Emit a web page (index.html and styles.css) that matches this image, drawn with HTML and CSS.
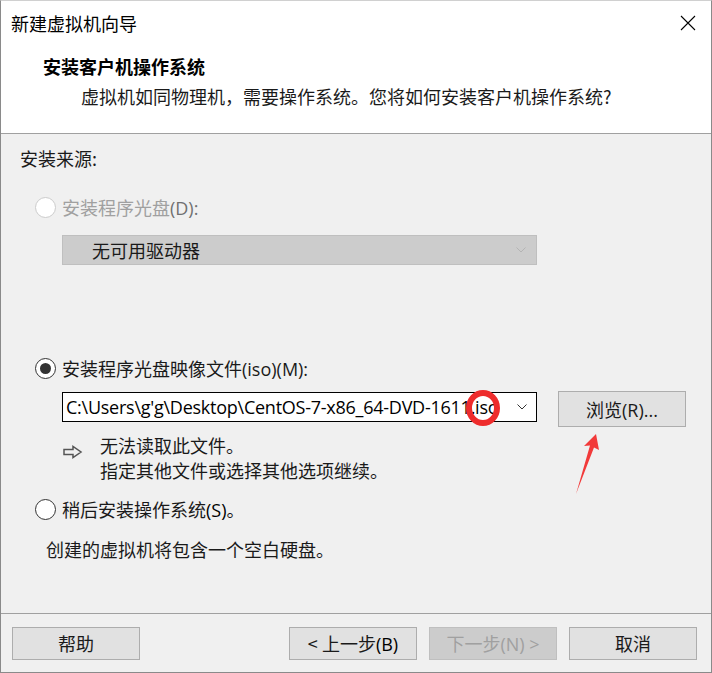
FILE: index.html
```html
<!DOCTYPE html>
<html lang="zh-CN">
<head>
    <meta charset="UTF-8">
    <meta name="viewport" content="width=device-width, initial-scale=1.0">
    <title>新建虚拟机向导</title>
    <link rel="stylesheet" href="styles.css">
</head>
<body>

    <div class="dialog">
        <div class="dialog__top">
            <div class="titlebar">
                <span class="titlebar__text">新建虚拟机向导</span>
                <button class="titlebar__close" type="button">
                    <svg width="16" height="16" viewBox="0 0 16 16">
                        <path d="M1 1 L15 15 M15 1 L1 15" stroke="#000" stroke-width="1.1" fill="none"/>
                    </svg>
                </button>
            </div>
            <div class="header">
                <p class="header__title">安装客户机操作系统</p>
                <p class="header__sub">虚拟机如同物理机，需要操作系统。您将如何安装客户机操作系统?</p>
            </div>
        </div>

        <div class="dialog__body">
            <p class="group-label">安装来源:</p>

            <label class="option option--disabled option--first">
                <span class="radio"></span>
                <span>安装程序光盘<span class="latin">(D):</span></span>
            </label>
            <div class="select select--disabled">
                <span class="select__text">无可用驱动器</span>
                <svg class="chevron" width="10" height="6" viewBox="0 0 10 6">
                    <path d="M0.5 0.5 L5 5 L9.5 0.5" stroke="#b4b4b4" fill="none"/>
                </svg>
            </div>

            <label class="option option--iso">
                <span class="radio radio--checked"></span>
                <span>安装程序光盘映像文件<span class="latin">(iso)(M):</span></span>
            </label>
            <div class="iso-row">
                <div class="select select--path">
                    <span class="select__path">C:\Users\g'g\Desktop\CentOS-7-x86_64-DVD-1611.iso</span>
                    <svg class="chevron" width="10" height="6" viewBox="0 0 10 6">
                        <path d="M0.5 0.5 L5 5 L9.5 0.5" stroke="#333" fill="none"/>
                    </svg>
                    <span class="mark-circle"></span>
                </div>
                <button class="btn btn--browse" type="button">浏览<span class="latin">(R)...</span></button>
                <svg class="mark-arrow" width="30" height="62" viewBox="0 0 30 62">
                    <path d="M22 0 L25 16 L20 13.5 L2 60 L16 11.5 L10 12 Z" fill="#f23a3a"/>
                </svg>
            </div>

            <div class="notice">
                <span class="notice__icon">
                    <svg width="20" height="14" viewBox="0 0 20 14">
                        <path d="M1 4.5 H10 V1.5 L18 7 L10 12.5 V9.5 H1 Z" stroke="#555" stroke-width="1.5" fill="none"/>
                    </svg>
                </span>
                <div class="notice__text">
                    <p>无法读取此文件。</p>
                    <p>指定其他文件或选择其他选项继续。</p>
                </div>
            </div>

            <label class="option option--later">
                <span class="radio"></span>
                <span>稍后安装操作系统<span class="latin latin--dark">(S)</span>。</span>
            </label>
            <p class="later-note">创建的虚拟机将包含一个空白硬盘。</p>
        </div>

        <div class="dialog__footer">
            <button class="btn btn--wide" type="button">帮助</button>
            <div class="footer__nav">
                <button class="btn btn--wide" type="button">&lt; 上一步<span class="latin latin--dark">(B)</span></button>
                <button class="btn btn--wide btn--disabled" type="button">下一步<span class="latin">(N) &gt;</span></button>
                <button class="btn btn--wide" type="button">取消</button>
            </div>
        </div>
    </div>

</body>
</html>
```

FILE: styles.css
```css
* {
    box-sizing: border-box;
}

body {
    margin: 0;
    font-family: "Noto Sans CJK SC", "Noto Sans", sans-serif;
    font-size: 18px;
    color: #1a1a1a;
}

p {
    margin: 0;
}

.latin {
    font-family: "Open Sans", "Noto Sans", sans-serif;
}

.latin--dark {
    color: #000;
}

.dialog {
    width: 712px;
    height: 673px;
    display: flex;
    flex-direction: column;
    border: 1px solid #8a8a8a;
    border-top-color: #d0d0d0;
    background: #f0f0f0;
}

/* white top part: window title + page header */
.dialog__top {
    background: #fff;
    height: 133px;
    border-bottom: 1px solid #a0a0a0;
}

.titlebar {
    height: 44px;
    display: flex;
    align-items: center;
    justify-content: space-between;
    padding-left: 10px;
}

.titlebar__text {
    font-size: 18px;
    color: #000;
}

.titlebar__close {
    border: none;
    background: none;
    width: 46px;
    height: 44px;
    padding: 0;
    display: flex;
    align-items: center;
    justify-content: center;
}

.header {
    padding-left: 42px;
    padding-top: 8px;
}

.header__title {
    font-weight: 700;
    font-size: 18px;
    color: #000;
    line-height: 26px;
}

.header__sub {
    margin-top: 2px;
    padding-left: 38px;
    line-height: 30px;
    color: #1a1a1a;
}

.dialog__body {
    flex: 1;
    padding: 11px 0 0 19px;
}

.group-label {
    line-height: 26px;
}

.option {
    display: flex;
    align-items: center;
    gap: 6px;
    line-height: 24px;
    padding-left: 15px;
}

.option--first {
    margin-top: 24px;
}

.option--disabled {
    color: #a0a0a0;
}

.option--disabled .latin {
    color: #707070;
}

.radio {
    width: 21px;
    height: 21px;
    border-radius: 50%;
    border: 1px solid #333;
    background: #fff;
    display: flex;
    align-items: center;
    justify-content: center;
    flex-shrink: 0;
}

.option--disabled .radio {
    border-color: #cccccc;
}

.radio--checked::after {
    content: "";
    width: 11px;
    height: 11px;
    border-radius: 50%;
    background: #333;
}

.select {
    position: relative;
    display: flex;
    align-items: center;
    justify-content: space-between;
    margin-left: 42px;
    width: 475px;
    height: 30px;
}

.select--disabled {
    margin-top: 15px;
    background: #cccccc;
    border: 1px solid #bfbfbf;
    padding: 0 10px 0 29px;
    color: #1a1a1a;
}

.chevron {
    flex-shrink: 0;
}

.option--iso {
    margin-top: 91px;
}

.iso-row {
    position: relative;
    display: flex;
    align-items: flex-start;
    gap: 21px;
    margin-top: 10px;
}

.select--path {
    margin-top: 1px;
    background: #fff;
    border: 1px solid #000;
    padding: 0 9px 0 3px;
    gap: 8px;
}

.select__path {
    flex: 1;
    min-width: 0;
    overflow: hidden;
    font-family: "Open Sans", "Noto Sans", sans-serif;
    font-size: 18px;
    letter-spacing: -0.25px;
    color: #000;
    white-space: nowrap;
}

/* red marker drawn over the file extension */
.mark-circle {
    position: absolute;
    left: 403px;
    top: -3px;
    width: 34px;
    height: 36px;
    border: 6px solid #ee2c2c;
    border-radius: 50%;
}

.mark-arrow {
    position: absolute;
    left: 554px;
    top: 43px;
}

.btn {
    font-family: "Noto Sans CJK SC", "Noto Sans", sans-serif;
    font-size: 18px;
    color: #1a1a1a;
    background: #e1e1e1;
    border: 1px solid #adadad;
    padding: 0;
}

.btn--browse {
    width: 128px;
    height: 36px;
}

.btn--wide {
    width: 128px;
    height: 33px;
}

.btn--disabled {
    background: #cccccc;
    border-color: #bfbfbf;
    color: #a0a0a0;
}

.notice {
    display: flex;
    margin-top: 6px;
    padding-left: 43px;
}

.notice__icon {
    width: 37px;
    padding-top: 5px;
}

.notice__text p {
    line-height: 25px;
    color: #1a1a1a;
}

.option--later {
    margin-top: 14px;
}

.later-note {
    margin-top: 14px;
    padding-left: 26px;
    line-height: 26px;
}

.dialog__footer {
    height: 59px;
    border-top: 1px solid #a0a0a0;
    display: flex;
    align-items: center;
    justify-content: space-between;
    padding: 0 14px 0 11px;
}

.footer__nav {
    display: flex;
    gap: 12px;
}
```
